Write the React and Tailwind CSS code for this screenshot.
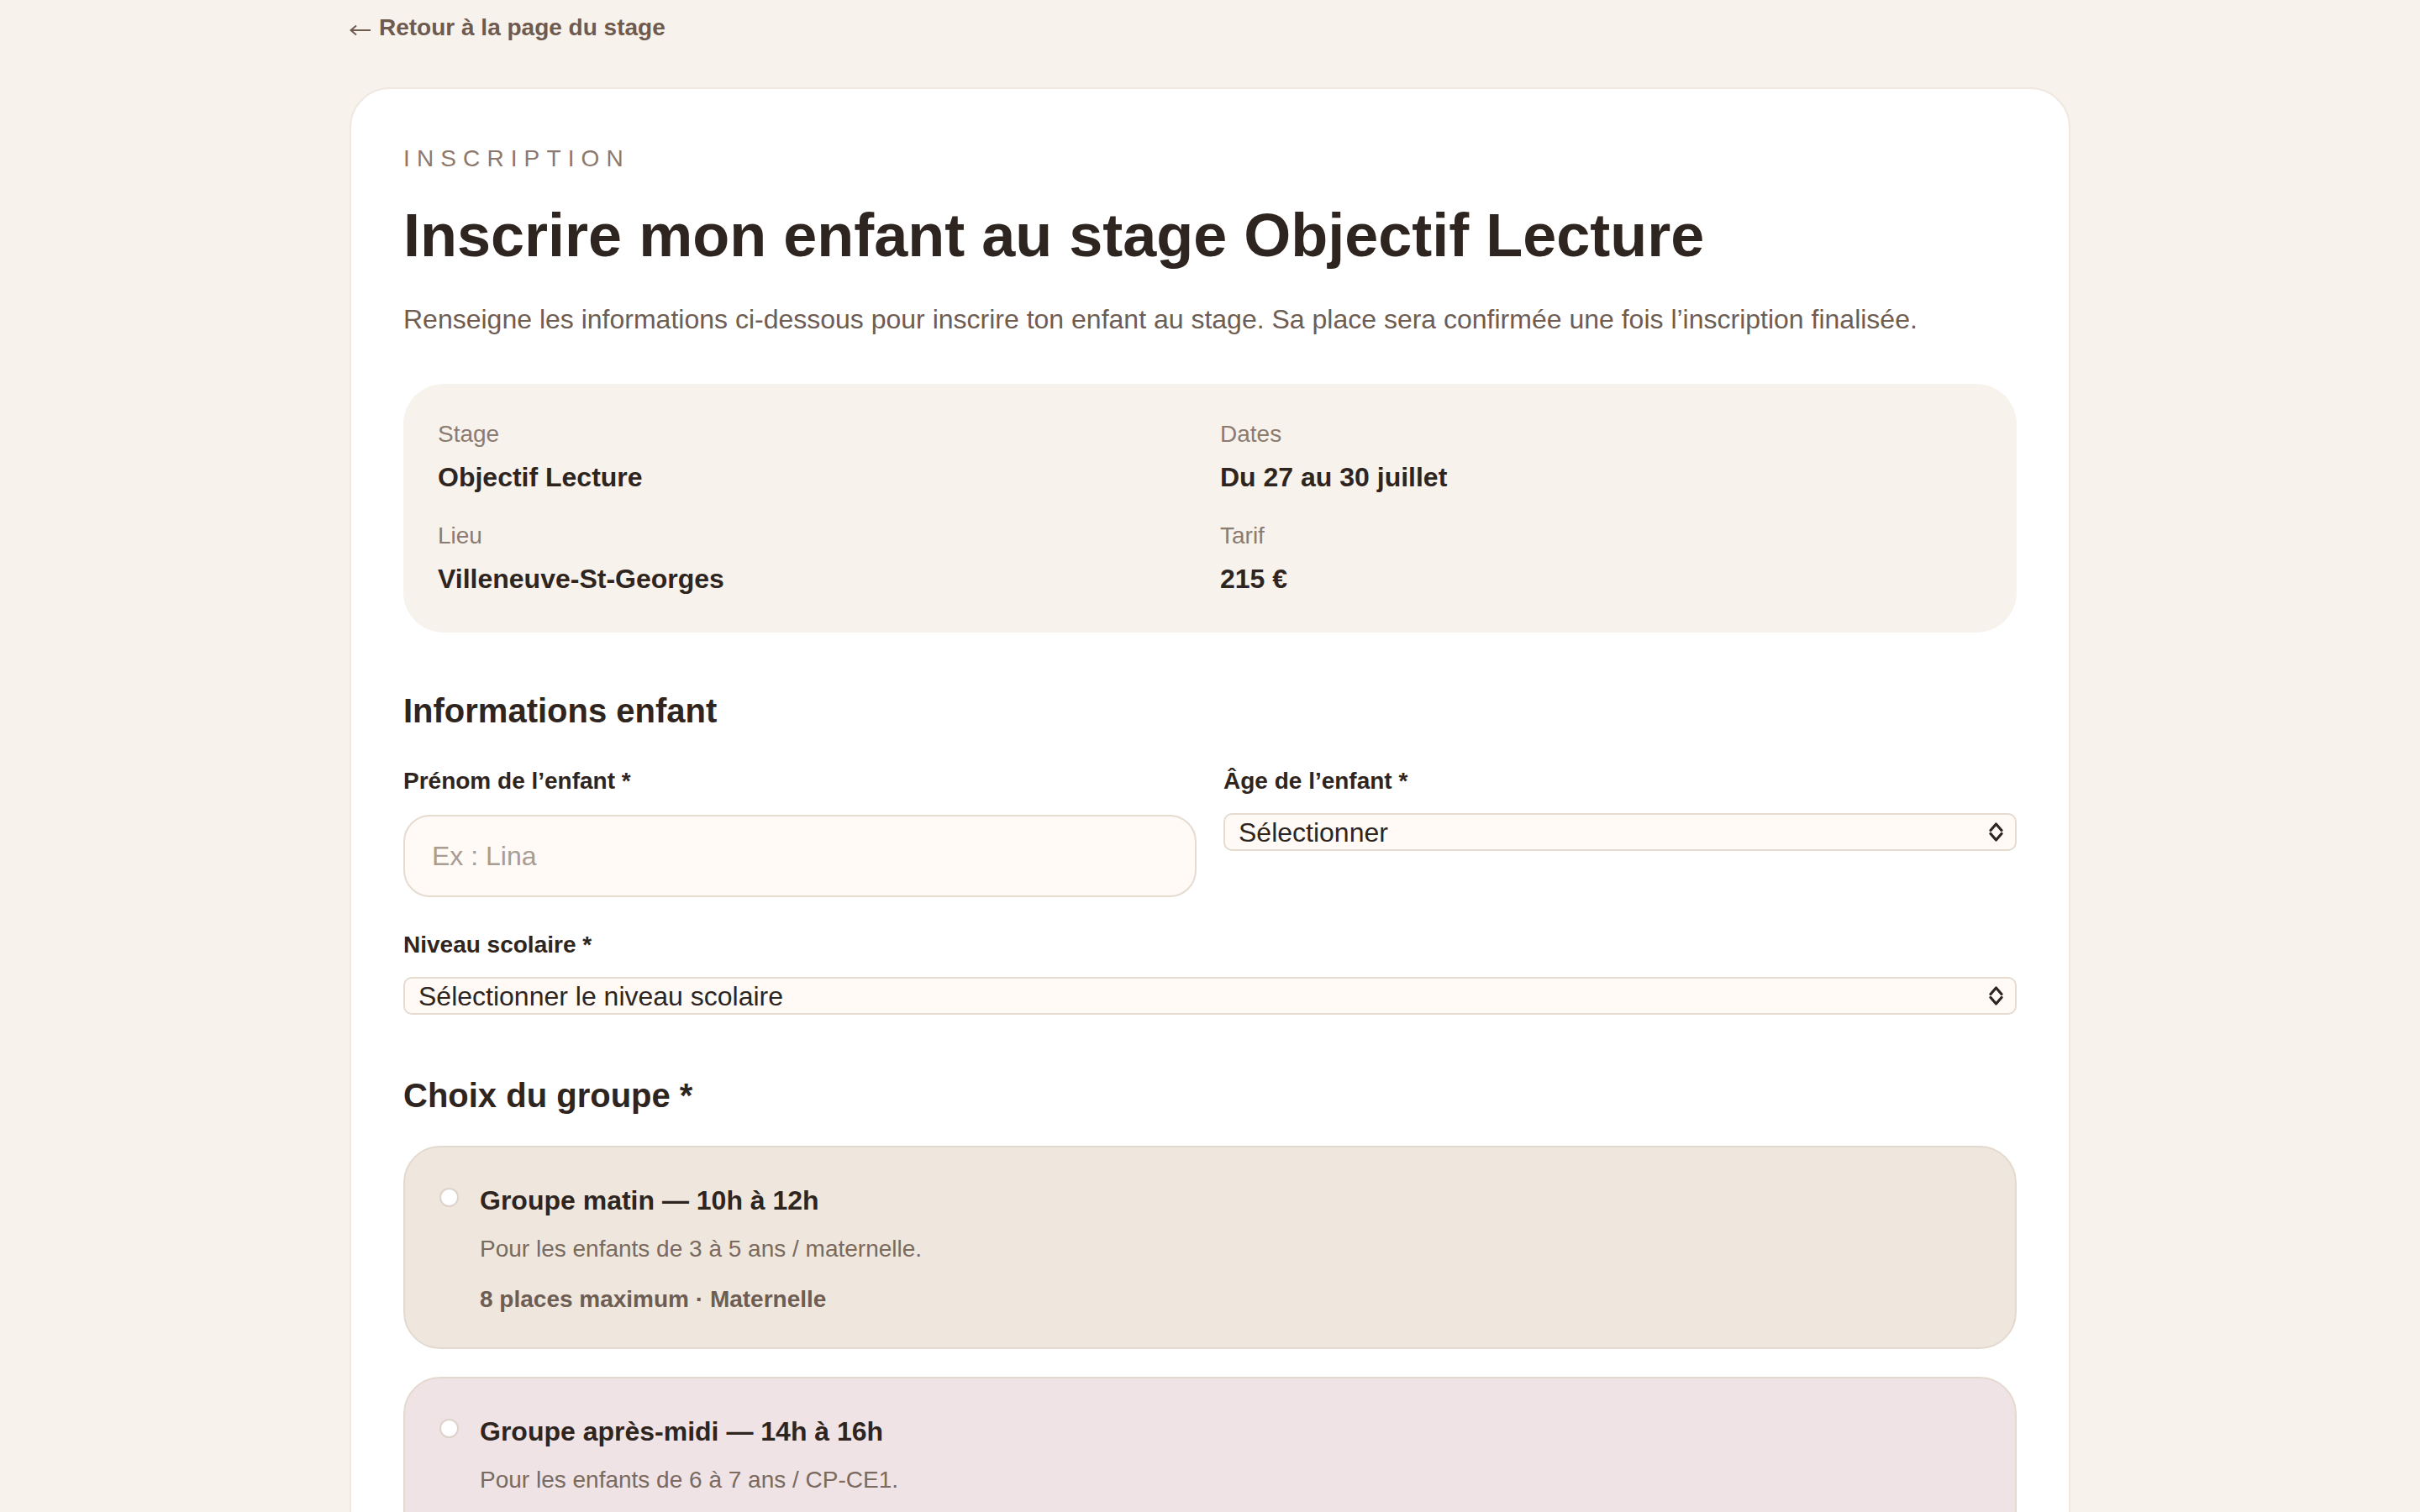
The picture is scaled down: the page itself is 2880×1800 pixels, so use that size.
import React from "react";

function Chevrons() {
  return (
    <svg width="17" height="23" viewBox="0 0 17 23" fill="none" className="shrink-0">
      <polyline points="2,9.5 8.5,2 15,9.5" stroke="#2f2520" strokeWidth="3.2" strokeLinecap="round" strokeLinejoin="round" />
      <polyline points="2,13.5 8.5,21 15,13.5" stroke="#2f2520" strokeWidth="3.2" strokeLinecap="round" strokeLinejoin="round" />
    </svg>
  );
}

function BackArrow() {
  return (
    <svg width="26" height="14" viewBox="0 0 26 14" fill="none" className="mr-[9px] inline-block align-[-1px]">
      <line x1="1.5" y1="7" x2="25" y2="7" stroke="#6e5a4f" strokeWidth="2" />
      <polyline points="8,1.5 1.5,7 8,12.5" stroke="#6e5a4f" strokeWidth="2" fill="none" />
    </svg>
  );
}

function FakeSelect({ value }) {
  return (
    <div className="flex h-[45px] items-center justify-between rounded-[10px] border-2 border-[#e5dbd1] bg-[#fffaf6] pl-[16px] pr-[14px]">
      <span className="text-[32px] leading-[40px] text-[#2f2520]">{value}</span>
      <Chevrons />
    </div>
  );
}

function InfoItem({ label, value }) {
  return (
    <div>
      <div className="text-[28px] leading-[42px] text-[#8b7b71]">{label}</div>
      <div className="mt-[6px] text-[32px] leading-[48px] font-bold text-[#2f2520]">{value}</div>
    </div>
  );
}

function GroupCard({ title, desc, meta, bg }) {
  return (
    <div className={`rounded-[44px] border-2 border-[#e3d9cf] ${bg} pl-[41px] pr-[41px] pt-[39px] pb-[36px]`}>
      <div className="flex items-start gap-[25px]">
        <div className="mt-[9px] h-[23px] w-[23px] shrink-0 rounded-full border-2 border-[#ddd3cb] bg-white" />
        <div>
          <div className="text-[32px] leading-[48px] font-bold text-[#2f2520]">{title}</div>
          <div className="mt-[13px] text-[28px] leading-[42px] text-[#7a6a60]">{desc}</div>
          <div className="mt-[18px] text-[28px] leading-[42px] font-bold text-[#6e5d53]">{meta}</div>
        </div>
      </div>
    </div>
  );
}

export default function App() {
  return (
    <div className="min-h-screen bg-[#f7f2ec] font-['Liberation_Sans',Arial,sans-serif]">
      <div className="mx-auto w-[2048px] pt-[12px] pb-[120px]">
        <a href="#" className="block text-[28px] leading-[42px] font-bold text-[#6e5a4f]">
          <BackArrow />Retour à la page du stage
        </a>

        <div className="mt-[50px] rounded-[48px] border-2 border-[#efe7e0] bg-white px-[62px] pt-[62px] pb-[80px]">
          <div className="text-[28px] leading-[42px] tracking-[0.29em] text-[#8c786c]">INSCRIPTION</div>
          <h1 className="mt-[30px] text-[72px] leading-[80px] font-bold text-[#2f2520]">
            Inscrire mon enfant au stage Objectif Lecture
          </h1>
          <p className="mt-[36px] text-[32px] leading-[48px] text-[#6e5d53]">
            Renseigne les informations ci-dessous pour inscrire ton enfant au stage. Sa place sera confirmée une fois l’inscription finalisée.
          </p>

          <div className="mt-[53px] grid grid-cols-2 gap-x-[24px] gap-y-[25px] rounded-[48px] bg-[#f7f2ec] px-[41px] pt-[39px] pb-[40px]">
            <InfoItem label="Stage" value="Objectif Lecture" />
            <InfoItem label="Dates" value="Du 27 au 30 juillet" />
            <InfoItem label="Lieu" value="Villeneuve-St-Georges" />
            <InfoItem label="Tarif" value="215 €" />
          </div>

          <h2 className="mt-[69px] text-[40px] leading-[48px] font-bold text-[#2f2520]">Informations enfant</h2>

          <div className="mt-[39px] grid grid-cols-2 gap-x-[32px] gap-y-[36px]">
            <div>
              <label className="block text-[28px] leading-[42px] font-bold text-[#2f2520]">Prénom de l’enfant *</label>
              <input
                type="text"
                placeholder="Ex : Lina"
                className="mt-[19px] block h-[98px] w-full rounded-[32px] border-2 border-[#e5dbd1] bg-[#fffaf6] px-[32px] text-[32px] text-[#2f2520] outline-none placeholder:text-[#a99c93]"
              />
            </div>
            <div>
              <label className="block text-[28px] leading-[42px] font-bold text-[#2f2520]">Âge de l’enfant *</label>
              <div className="mt-[17px]">
                <FakeSelect value="Sélectionner" />
              </div>
            </div>
            <div className="col-span-2">
              <label className="block text-[28px] leading-[42px] font-bold text-[#2f2520]">Niveau scolaire *</label>
              <div className="mt-[17px]">
                <FakeSelect value="Sélectionner le niveau scolaire" />
              </div>
            </div>
          </div>

          <h2 className="mt-[72px] text-[40px] leading-[48px] font-bold text-[#2f2520]">Choix du groupe *</h2>

          <div className="mt-[36px] flex flex-col gap-[33px]">
            <GroupCard
              title="Groupe matin — 10h à 12h"
              desc="Pour les enfants de 3 à 5 ans / maternelle."
              meta="8 places maximum · Maternelle"
              bg="bg-[#efe7dd]"
            />
            <GroupCard
              title="Groupe après-midi — 14h à 16h"
              desc="Pour les enfants de 6 à 7 ans / CP-CE1."
              meta="8 places maximum · CP-CE1"
              bg="bg-[#efe3e5]"
            />
          </div>
        </div>
      </div>
    </div>
  );
}
